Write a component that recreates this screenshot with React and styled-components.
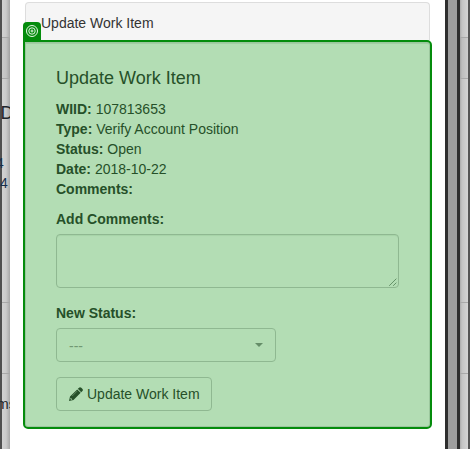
import React from "react";
import styled, { createGlobalStyle } from "styled-components";

const GlobalStyle = createGlobalStyle`
  * { box-sizing: border-box; }
  body {
    margin: 0;
    overflow: hidden;
    background: #fff;
    font: 14px/20px "Liberation Sans", Arial, sans-serif;
    color: #333;
  }
`;

const Page = styled.div`
  display: grid;
  grid-template-columns: 10px 435px 25px;
  height: 449px;
  overflow: hidden;
`;

const Gutter = styled.aside`
  display: flex;
  min-width: 0;
  overflow: hidden;
  background: linear-gradient(90deg, #505050 0 2px, #d2d2d2 2px, #cbcbcb 6px, #a8a8a8 10px);
`;

const Frame = styled.aside`
  display: grid;
  grid-template-columns: 3px 9px 3px 8px 2px;
`;

const Bar = styled.div`
  background: ${(p) => p.$color};
`;

const Track = styled.div`
  background: linear-gradient(90deg, #ababab, #c4c4c4 2px, #d5d5d5);
`;

const Section = styled.div`
  height: ${(p) => p.$height}px;
  border-bottom: 1px solid ${(p) => (p.$last ? "transparent" : "#a9a9a9")};
  background: ${(p) => (p.$shade ? "rgba(0, 0, 0, 0.035)" : "transparent")};
`;

const Sections = styled.div`
  width: 8px;
  margin-left: ${(p) => p.$inset || 0}px;
`;

const Clipped = styled.div`
  width: 20px;
  margin-left: ${(p) => p.$shift || 0}px;
  padding-top: ${(p) => p.$top}px;
  font-size: ${(p) => p.$size || 14}px;
  line-height: 20px;
  color: ${(p) => p.$color || "#20252b"};
  white-space: nowrap;
`;

const Modal = styled.main`
  padding: 2px 13px 0;
  background: #fff;
`;

const PanelHeading = styled.header`
  width: 405px;
  height: 38px;
  margin-left: 2px;
  padding: 10px 15px 0;
  border: 1px solid #ddd;
  border-bottom: 0;
  border-radius: 4px 4px 0 0;
  background: #f5f5f5;
`;

const PanelBody = styled.section`
  position: relative;
  height: 389px;
  padding: 24px 30px 0;
  border: 2px solid #048c0c;
  border-radius: 0 5px 5px 5px;
  background: #b3ddb4;
  box-shadow: inset 0 0 0 1px #9bc79d, inset 0 2px 0 #a2cda4;
  color: #265029;
`;

const Marker = styled.span`
  position: absolute;
  left: -2px;
  top: -20px;
  display: flex;
  justify-content: center;
  align-items: center;
  width: 18px;
  height: 20px;
  padding-bottom: 2px;
  border-radius: 4px 4px 0 0;
  background: #048c0c;
`;

const Title = styled.h4`
  margin: 0 0 10px 1px;
  padding-top: 1px;
  font-size: 18px;
  font-weight: 400;
  line-height: 22px;
`;

const Details = styled.div`
  margin-left: 1px;
`;

const Label = styled.label`
  display: block;
  margin: ${(p) => p.$top}px 0 5px 1px;
  font-weight: 700;
`;

const TextArea = styled.textarea`
  display: block;
  width: 343px;
  height: 54px;
  margin-left: 1px;
  padding: 6px 12px;
  border: 1px solid #8fb891;
  border-radius: 4px;
  outline: 0;
  resize: none;
  background: transparent;
  box-shadow: inset 0 1px 1px rgba(0, 80, 0, 0.07);
`;

const CommentField = styled.div`
  position: relative;
  width: 344px;
`;

const Grip = styled.svg`
  position: absolute;
  right: 2px;
  bottom: 2px;
`;

const StatusSelect = styled.button`
  display: flex;
  justify-content: space-between;
  align-items: center;
  width: 220px;
  height: 34px;
  margin-left: 1px;
  padding: 0 12px;
  border: 1px solid #8fb891;
  border-radius: 4px;
  background: transparent;
  color: #719873;
  font: inherit;
`;

const StatusValue = styled.span`
  padding-top: 2px;
`;

const Caret = styled.span`
  border: 4px solid transparent;
  border-top-color: #658d68;
  border-bottom: 0;
`;

const ActionButton = styled.button`
  display: flex;
  align-items: center;
  gap: 4px;
  width: 156px;
  height: 34px;
  margin: 15px 0 0 1px;
  padding: 0 12px;
  border: 1px solid #8fb891;
  border-radius: 4px;
  background: transparent;
  color: #265029;
  font: inherit;
  white-space: nowrap;
`;

const PencilIcon = styled.svg`
  flex: none;
  width: 14px;
  height: 14px;
`;

const details = [
  ["WIID:", "107813653"],
  ["Type:", "Verify Account Position"],
  ["Status:", "Open"],
  ["Date:", "2018-10-22"],
  ["Comments:", ""],
];

function BackdropSections({ inset, children = [] }) {
  return (
    <Sections $inset={inset}>
      <Section $height={38} />
      <Section $height={41} $shade />
      <Section $height={224}>{children[0]}</Section>
      <Section $height={71} />
      <Section $height={75} $last>{children[1]}</Section>
    </Sections>
  );
}

export default function App() {
  return (
    <>
      <GlobalStyle />
      <Page>
        <Gutter>
          <BackdropSections inset={2}>
            {[
              <React.Fragment key="top">
                <Clipped $top={24} $shift={-1.5} $size={18}>D</Clipped>
                <Clipped $top={30} $shift={-6} $color="#172f4c">4</Clipped>
                <Clipped $top={0} $shift={-2} $color="#172f4c">4</Clipped>
              </React.Fragment>,
              <Clipped key="bottom" $top={20} $shift={-5}>ms</Clipped>,
            ]}
          </BackdropSections>
        </Gutter>
        <Modal>
          <PanelHeading>Update Work Item</PanelHeading>
          <PanelBody>
            <Marker>
              <svg width="14" height="14" viewBox="0 0 14 14" fill="none" stroke="#e4f6e4">
                <circle cx="7" cy="7" r="5.5" />
                <circle cx="7" cy="7" r="3.2" />
                <circle cx="7" cy="7" r="1" />
              </svg>
            </Marker>
            <Title>Update Work Item</Title>
            <Details>
              {details.map(([name, value]) => (
                <div key={name}><b>{name}</b> {value}</div>
              ))}
            </Details>
            <Label $top={10}>Add Comments:</Label>
            <CommentField>
              <TextArea aria-label="Add Comments" />
              <Grip width="8" height="8" viewBox="0 0 8 8" stroke="#35633a" strokeDasharray="1 .4">
                <path d="M.5 7.5l7-7M4.5 7.5l3-3" />
              </Grip>
            </CommentField>
            <Label $top={15}>New Status:</Label>
            <StatusSelect><StatusValue>---</StatusValue><Caret /></StatusSelect>
            <ActionButton>
              <PencilIcon viewBox="0 0 14 14" fill="currentColor">
                <path d="M9.8.9Q11-.4 12.3.8L13.3 1.8Q14.5 3 13.2 4.2L12.2 5.2 8.8 1.8zM8.2 2.4l3.5 3.4-7.2 7.1L0 14l1-4.4z" />
                <path d="M1.7 10.7l1.7 1.7-1.2.3-.8-.8z" fill="#b3ddb4" />
                <path d="M8 4.2L3.2 9" fill="none" stroke="#7fa881" strokeWidth=".6" />
              </PencilIcon>
              Update Work Item
            </ActionButton>
          </PanelBody>
        </Modal>
        <Frame>
          <Bar $color="#2e2e2e" />
          <Bar $color="#9e9e9e" />
          <Bar $color="#2e2e2e" />
          <Track><BackdropSections /></Track>
          <Bar $color="#555" />
        </Frame>
      </Page>
    </>
  );
}
